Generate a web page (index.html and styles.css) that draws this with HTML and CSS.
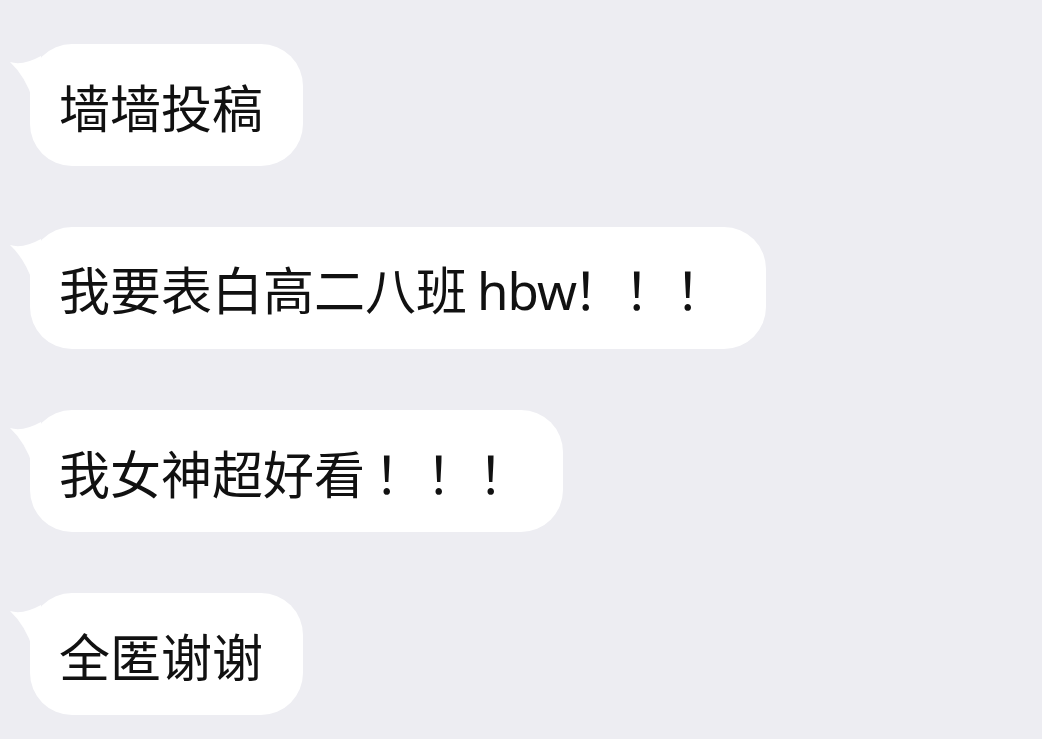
FILE: index.html
```html
<!DOCTYPE html>
<html lang="zh">
<head>
<meta charset="utf-8">
<link rel="stylesheet" href="styles.css">
</head>
<body>
<div class="chat">
  <div class="bubble"><svg class="tail" viewBox="0 0 40 50" width="40" height="50"><path d="M1 8 Q14 12 32 2 L32 46 L24 46 Q16 22 1 8 Z" fill="#fff"/></svg><span class="text">墙墙投稿</span></div>
  <div class="bubble"><svg class="tail" viewBox="0 0 40 50" width="40" height="50"><path d="M1 8 Q14 12 32 2 L32 46 L24 46 Q16 22 1 8 Z" fill="#fff"/></svg><span class="text">我要表白高二八班<span class="latin">hbw</span>！！！</span></div>
  <div class="bubble"><svg class="tail" viewBox="0 0 40 50" width="40" height="50"><path d="M1 8 Q14 12 32 2 L32 46 L24 46 Q16 22 1 8 Z" fill="#fff"/></svg><span class="text">我女神超好看<span class="bang">！！！</span></span></div>
  <div class="bubble"><svg class="tail" viewBox="0 0 40 50" width="40" height="50"><path d="M1 8 Q14 12 32 2 L32 46 L24 46 Q16 22 1 8 Z" fill="#fff"/></svg><span class="text">全匿谢谢</span></div>
</div>
</body>
</html>
```
FILE: styles.css
```css
html, body {
  margin: 0;
  padding: 0;
  background: #ededf2;
  width: 1042px;
  height: 739px;
  overflow: hidden;
}
.chat {
  display: flex;
  flex-direction: column;
  align-items: flex-start;
  gap: 61px;
  padding: 44px 0 0 30px;
}
.bubble {
  position: relative;
  display: flex;
  align-items: center;
  height: 122px;
  box-sizing: border-box;
  padding: 2px 40px 0 29px;
  background: #ffffff;
  border-radius: 42px;
}
.tail {
  position: absolute;
  left: -21px;
  top: 10px;
}
.text {
  font-family: "Noto Sans CJK SC", "Noto Sans", sans-serif;
  font-size: 51px;
  line-height: 1;
  color: #111;
  white-space: nowrap;
}
.latin {
  margin: 0 -3px 0 10px;
  font-family: "Noto Sans", "Noto Sans CJK SC", sans-serif;
  letter-spacing: -1px;
}
.bang {
  margin: 0 -7px 0 9px;
  letter-spacing: 1px;
}
```
